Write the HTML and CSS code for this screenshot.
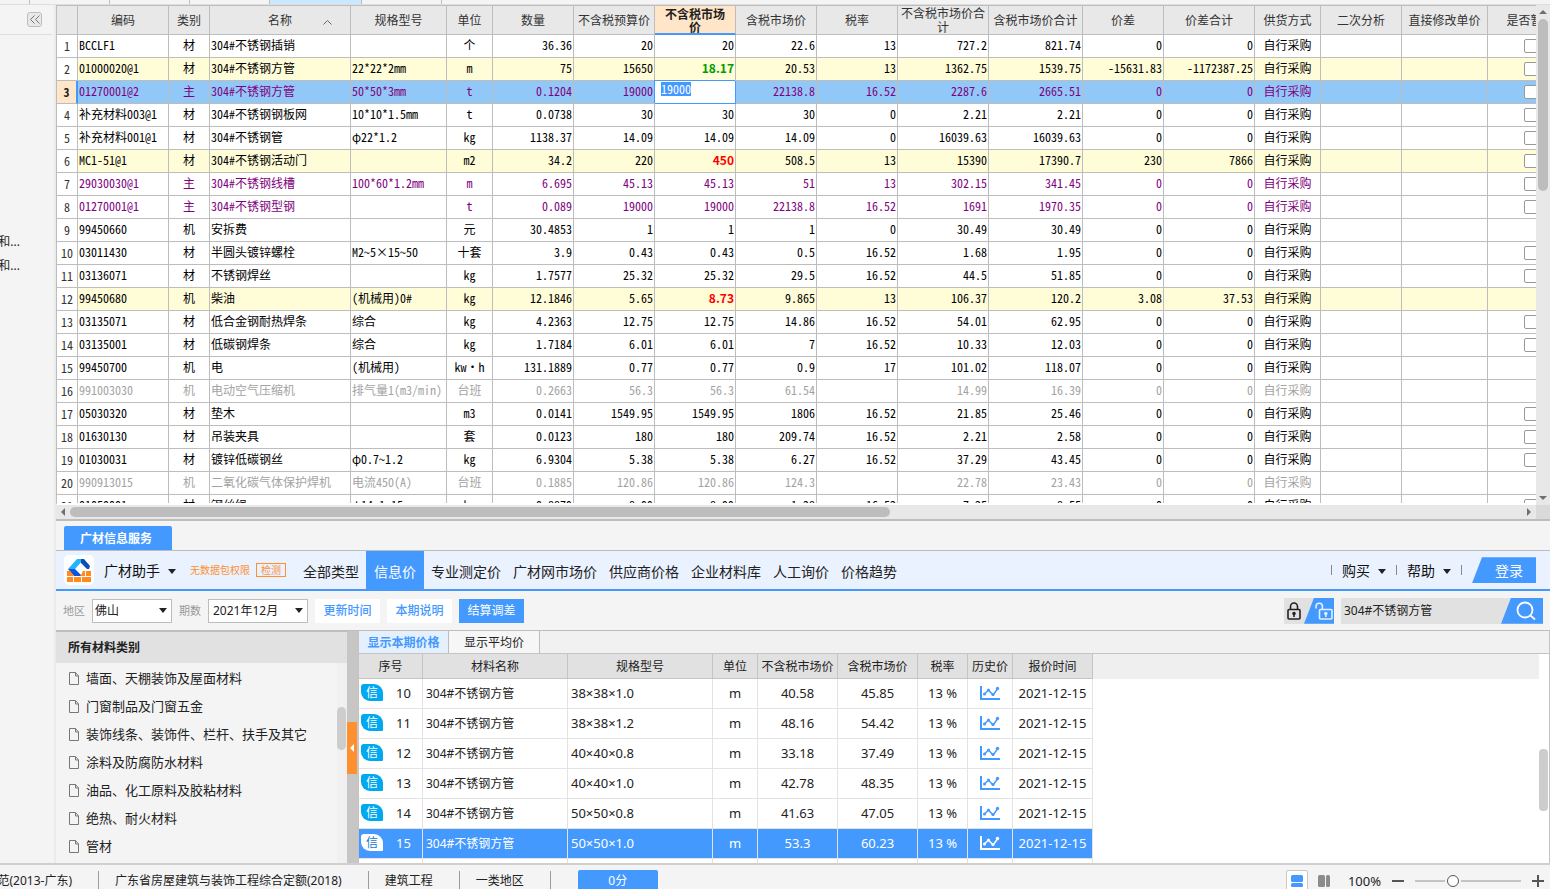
FILE: index.html
```html
<!DOCTYPE html>
<html lang="zh-CN">
<head>
<meta charset="utf-8">
<title>人材机汇总</title>
<link rel="stylesheet" href="styles.css">
</head>
<body>
<div class="doc-tabs"><span class="doc-tab first"></span><span class="doc-tab"></span><span class="doc-tab"></span><span class="doc-tab"></span><span class="doc-tab active"></span><span class="doc-tab"></span></div>

<div class="main">
  <aside class="rail">
    <div class="rail-head">
      <button class="collapse" aria-label="收起">
        <svg width="10" height="9" viewBox="0 0 10 9" fill="none" stroke="#777" stroke-width="1"><path d="M4.500 .5l-4 4 4 4M9.500 .5l-4 4 4 4"/></svg>
      </button>
    </div>
    <ul class="rail-list">
      <li>和...</li>
      <li>和...</li>
    </ul>
  </aside>

  <div class="workspace">
    <section class="grid-panel">
      <div class="grid-row">
        <div class="grid-view">
          <table class="grid">
            <colgroup>
              <col class="w21"><col class="w91"><col class="w41"><col class="w141"><col class="w96"><col class="w46"><col class="w81"><col class="w81"><col class="w81"><col class="w81"><col class="w81"><col class="w91"><col class="w94"><col class="w81"><col class="w91"><col class="w66"><col class="w81"><col class="w86"><col class="w86">
            </colgroup>
            <thead>
              <tr>
                <th></th><th>编码</th><th>类别</th>
                <th><div class="sorted">名称<svg class="sort" width="9" height="5" viewBox="0 0 9 5" fill="none" stroke="#666"><path d="M.5 4.500l4-4 4 4"/></svg></div></th>
                <th>规格型号</th><th>单位</th><th>数量</th><th>不含税预算价</th><th class="current">不含税市场价</th><th>含税市场价</th><th>税率</th><th>不含税市场价合计</th><th>含税市场价合计</th><th>价差</th><th>价差合计</th><th>供货方式</th><th>二次分析</th><th>直接修改单价</th><th>是否暂估</th>
              </tr>
            </thead>
            <tbody id="materials"></tbody>
          </table>
        </div>
        <div class="vbar"><i class="arrow up"></i><i class="vthumb"></i><i class="arrow down"></i></div>
      </div>
      <div class="hbar"><div class="htrack"><i class="arrow left"></i><i class="hthumb"></i><i class="arrow right"></i></div><div class="corner"></div></div>
    </section>

    <section class="info-panel">
      <div class="panel-tabs"><button class="panel-tab">广材信息服务</button></div>

      <header class="toolbar">
        <div class="logo">
          <svg width="24" height="24" viewBox="0 0 24 24">
            <path d="M10 1h7l-9 10H1z" fill="#25b4fa"/>
            <path d="M14 1h3l6 7-1 3h-2l-6-6z" fill="#0c4fb4"/>
            <path d="M1 11h7l6 6-1 2H8z" fill="#0a56e0"/>
            <path d="M0 13h3l5 6h5l3-6h8v11H0z" fill="#ff8a1e"/>
            <path d="M0 18.500h24M6.500 18.500V24M14.500 18.500V24M18.500 13v5.500" stroke="#fff" stroke-width="1"/>
          </svg>
        </div>
        <button class="menu brand">广材助手<i class="caret"></i></button>
        <span class="notice">无数据包权限</span>
        <button class="detect">检测</button>
        <nav class="nav">
          <a href="#">全部类型</a><a href="#" class="active">信息价</a><a href="#">专业测定价</a><a href="#">广材网市场价</a><a href="#">供应商价格</a><a href="#">企业材料库</a><a href="#">人工询价</a><a href="#">价格趋势</a>
        </nav>
        <div class="account">
          <i class="bar"></i><button class="menu">购买<i class="caret"></i></button>
          <i class="bar"></i><button class="menu">帮助<i class="caret"></i></button>
          <i class="bar"></i><button class="login">登录</button>
        </div>
      </header>

      <div class="filters">
        <label for="region">地区</label>
        <div class="select short"><select id="region"><option>佛山</option></select><i class="caret"></i></div>
        <label for="period">期数</label>
        <div class="select"><select id="period"><option>2021年12月</option></select><i class="caret"></i></div>
        <button class="chip">更新时间</button>
        <button class="chip">本期说明</button>
        <button class="chip primary">结算调差</button>
        <div class="tools">
          <div class="locks">
            <button class="lock" aria-label="锁定">
              <svg width="14" height="18" viewBox="0 0 14 18" fill="none" stroke="#222" stroke-width="1.600"><rect x="1" y="7.500" width="12" height="9.500" rx="1"/><path d="M3.500 7.500V4.500a3.500 3.500 0 0 1 7 0v3"/><path d="M7 11v4" /><circle cx="7" cy="11.500" r="1" fill="#222"/></svg>
            </button>
            <button class="unlock" aria-label="解锁">
              <svg width="18" height="18" viewBox="0 0 18 18" fill="none" stroke="#e4f0ff" stroke-width="1.600"><rect x="4.500" y="7.500" width="12.500" height="9.500" rx="1"/><path d="M1 6.500V4.500a3.200 3.200 0 0 1 6.400 0v3"/><path d="M10.800 11v4"/><circle cx="10.800" cy="11.500" r="1" fill="#e4f0ff"/></svg>
            </button>
          </div>
          <div class="search">
            <input type="text" value="304#不锈钢方管" aria-label="搜索材料">
            <button aria-label="搜索"><svg width="20" height="20" viewBox="0 0 20 20" fill="none" stroke="#fff" stroke-width="1.800"><circle cx="9" cy="9" r="7.500"/><path d="M14.300 14.300l4.700 4.200"/></svg></button>
          </div>
        </div>
      </div>

      <div class="split">
        <aside class="categories">
          <h2>所有材料类别</h2>
          <div class="cat-body">
            <ul id="categories"></ul>
            <div class="cat-bar"><i></i></div>
          </div>
        </aside>
        <div class="splitter"><button class="handle" aria-label="收起类别"></button></div>
        <div class="prices">
          <div class="price-tabs"><button class="active">显示本期价格</button><button>显示平均价</button></div>
          <div class="price-body">
            <div class="price-view">
              <table class="price">
                <colgroup><col class="p64"><col class="p145"><col class="p145"><col class="p45"><col class="p80"><col class="p80"><col class="p50"><col class="p45"><col class="p80"><col></colgroup>
                <thead><tr><th>序号</th><th>材料名称</th><th>规格型号</th><th>单位</th><th>不含税市场价</th><th>含税市场价</th><th>税率</th><th>历史价</th><th>报价时间</th><td class="rest"></td></tr></thead>
                <tbody id="prices"></tbody>
              </table>
            </div>
            <div class="price-bar"><i></i></div>
          </div>
        </div>
      </div>
    </section>
  </div>
</div>

<footer class="status">
  <div class="status-inner">
    <span class="st cut">范(2013-广东)</span>
    <span class="st">广东省房屋建筑与装饰工程综合定额(2018)</span>
    <span class="st">建筑工程</span>
    <span class="st">一类地区</span>
    <button class="score">0分</button>
    <div class="view">
      <button class="mode on" aria-label="上下布局"><svg width="12" height="12" viewBox="0 0 12 12" fill="#4499ff"><rect width="12" height="7" rx="1.500"/><rect y="8" width="12" height="4" rx="1.500"/></svg></button>
      <button class="mode" aria-label="左右布局"><svg width="12" height="12" viewBox="0 0 12 12" fill="#8c8c8c"><rect width="7" height="12" rx="1.500"/><rect x="8" width="4" height="12" rx="1.500"/></svg></button>
      <label class="percent" for="zoom">100%</label>
      <button class="step" aria-label="缩小"><svg width="12" height="12" stroke="#555" stroke-width="2"><path d="M0 6h12"/></svg></button>
      <input class="zoom" id="zoom" type="range" min="0" max="100" value="34">
      <button class="step" aria-label="放大"><svg width="12" height="12" stroke="#555" stroke-width="2"><path d="M0 6h12M6 0v12"/></svg></button>
    </div>
  </div>
</footer>
<script src="script.js"></script>
</body>
</html>
```
FILE: styles.css
```css
* { box-sizing: border-box; }
html, body { height: 100%; }
body {
  margin: 0;
  display: flex;
  flex-direction: column;
  overflow: hidden;
  background: #f4f4f4;
  color: #222;
  font: 12px/16px "Noto Sans", "Noto Sans CJK SC", sans-serif;
}
button, input, select { font: inherit; color: inherit; margin: 0; padding: 0; border: 0; background: none; border-radius: 0; }
ul { list-style: none; margin: 0; padding: 0; }
a { color: inherit; text-decoration: none; }
svg { display: block; flex: none; }

.doc-tabs { display: flex; height: 5px; flex: none; border-bottom: 1px solid #dedede; }
.doc-tab { width: 80px; border-right: 1px solid #bdbdbd; }
.doc-tab.first { width: 30px; }
.doc-tab.active { width: 92px; background: #cce8ff; }

.main { flex: 1; display: flex; min-height: 0; }
.rail { width: 56px; flex: none; border-right: 2px solid #ebebeb; }
.rail-head { display: flex; justify-content: flex-end; align-items: center; height: 30px; margin-right: 2px; padding-right: 10px; border-bottom: 1px solid #dedede; }
.collapse { width: 15px; height: 15px; display: grid; place-items: center; border: 1px solid #bdbdbd; border-radius: 3px; background: #e8e8e8; }
.rail-list { padding-top: 195px; }
.rail-list li { width: 20px; height: 24px; line-height: 24px; display: flex; justify-content: flex-end; overflow: hidden; white-space: nowrap; }

.workspace { flex: 1; min-width: 0; display: flex; flex-direction: column; }
.grid-panel { flex: 516 1 0; min-height: 0; display: flex; flex-direction: column; border-bottom: 2px solid #bdbdbd; }
.grid-row { flex: 1; min-height: 0; display: flex; }
.grid-view { flex: 1; min-width: 0; overflow: hidden; background: #fff; border: solid #bdbdbd; border-width: 1px 0 0 1px; border-bottom: 2px solid #fff; }
.grid {
  table-layout: fixed;
  width: 1px;
  border-spacing: 0;
  color: #000;
  font: 12px/14px "Noto Sans CJK SC", sans-serif;
  font-feature-settings: "hwid";
}
.w21 { width: 21px; } .w41 { width: 41px; } .w46 { width: 46px; } .w66 { width: 66px; }
.w81 { width: 81px; } .w86 { width: 86px; } .w91 { width: 91px; } .w94 { width: 94px; }
.w96 { width: 96px; } .w141 { width: 141px; }
.grid th, .grid td { border: solid #bdbdbd; border-width: 0 1px 1px 0; overflow: hidden; white-space: nowrap; }
.grid td { padding: 0 1px 2px; }
.grid th { padding: 0 2px; font-weight: 400; color: #333; text-align: center; }
.grid thead th { height: 29px; background: #e8e8e8; white-space: normal; }
.grid thead th.current { padding: 0 6px; background: #ffe6c8; font-weight: 700; color: #222; border-bottom: 2px solid #4499ff; line-height: 13px; }
.sorted { display: flex; justify-content: center; align-items: center; position: relative; }
.sort { position: absolute; right: 16px; top: 7px; }
.grid tbody th { padding: 0; }
.grid tbody td, .grid tbody th { height: 23px; }
.grid .c { text-align: center; }
.grid .r { text-align: right; }
.grid .changed td { background: #fffcd8; }
.grid .main-item { color: #800080; }
.grid .locked td { color: #a3a3a3; }
.grid .selected td { background: #92c8f7; }
.grid .selected th { background: #ffe6c8; font-weight: 700; border-right: 2px solid #4499ff; color: #222; }
.grid .fall, .grid .rise { font-weight: 700; font-feature-settings: normal; }
.grid .fall { color: #009c00; }
.grid .rise { color: #ff0000; }
.grid .selected .editing { background: #fff; border-color: #4499ff; box-shadow: -1px -1px 0 #4499ff; vertical-align: top; padding: 1px 6px; text-align: left; }
.editing input { display: block; width: 30px; height: 14px; line-height: 14px; background: #4499ff; color: #fff; font-feature-settings: "hwid"; }
.grid input[type="checkbox"] { appearance: none; display: block; width: 14px; height: 14px; margin: 1px auto 0; border: 1px solid #999; border-radius: 2px; background: #fff; }

.arrow { width: 0; height: 0; border: 4px solid transparent; }
.up { border-top: 0; border-bottom-color: #6e6e78; }
.down { border-bottom: 0; border-top-color: #6e6e78; }
.left { border-left: 0; border-right-color: #6e6e78; }
.right { border-right: 0; border-left-color: #6e6e78; }
.vbar { width: 14px; flex: none; display: flex; flex-direction: column; align-items: center; padding: 5px 0 5px; background: #e8e8e8; }
.vthumb { width: 10px; flex: 0 0 35%; margin: 5px 0 auto; border-radius: 5px; background: #bdbdbd; }
.hbar { height: 14px; flex: none; display: flex; }
.htrack { flex: 1; display: flex; align-items: center; padding: 0 5px; background: #e8e8e8; }
.hthumb { height: 10px; width: 820px; margin: 0 auto 0 5px; border-radius: 5px; background: #bdbdbd; }
.corner { width: 14px; background: #d9d9d9; }

.info-panel { flex: 343 1 0; min-height: 0; display: flex; flex-direction: column; }
.panel-tabs { height: 29px; flex: none; display: flex; align-items: flex-end; padding-left: 8px; }
.panel-tab { height: 24px; padding: 2px 20px 0 16px; background: #4499ff; color: #fff; font-weight: 700; border-radius: 2px 2px 0 0; }
.toolbar { height: 41px; flex: none; display: flex; align-items: center; padding: 0 14px 0 8px; border-top: 1px solid #bdbdbd; border-bottom: 2px solid #4499ff; background: #eaf1ff; white-space: nowrap; }
.logo { width: 30px; height: 30px; display: grid; place-items: center; margin-right: 10px; border-radius: 5px; background: #fff; }
.menu { display: flex; align-items: center; gap: 8px; padding-top: 2px; font-size: 14px; line-height: 20px; color: #111; }
.caret { flex: none; width: 0; height: 0; border: solid transparent; border-width: 5px 4px 0; border-top-color: #222; }
.notice { margin-left: 14px; font-size: 10px; color: #ff9030; }
.detect { width: 30px; height: 14px; margin: 0 11px 0 6px; border: 1px solid #ff9030; color: #ff9030; font-size: 10px; line-height: 12px; }
.nav { display: flex; align-self: stretch; font-size: 14px; line-height: 42px; }
.nav a { height: 38px; padding: 0 6px; }
.nav .active { padding: 0 8px; margin: 0 1px; background: #4499ff; color: #fff; }
.account { margin-left: auto; display: flex; align-items: center; gap: 10px; }
.bar { width: 1px; height: 10px; background: #888; }
.login { width: 64px; height: 26px; padding: 1px 0 0 10px; background: #4499ff; color: #fff; font-size: 14px; clip-path: polygon(10px 0, 100% 0, 100% 100%, 0 100%); }

.filters { height: 39px; flex: none; display: flex; align-items: center; padding: 0 7px; white-space: nowrap; }
.filters label { color: #999; font-size: 11px; margin-right: 7px; }
.select { position: relative; width: 100px; height: 24px; margin-right: 7px; border: 1px solid #bdbdbd; background: #fff; }
.select.short { width: 80px; }
.select select { appearance: none; width: 100%; height: 100%; padding-left: 4px; }
.select.short select { padding-left: 2px; }
.select .caret { position: absolute; right: 4px; top: 8px; pointer-events: none; }
.chip { width: 65px; height: 24px; margin-right: 7px; background: #fff; color: #4499ff; font-weight: 500; }
.chip.primary { background: #4499ff; color: #fff; font-weight: 400; }
.tools { margin-left: auto; display: flex; gap: 7px; height: 26px; }
.locks { display: flex; width: 50px; background: #e1e1e1; }
.lock { width: 20px; display: grid; place-items: center; }
.unlock { width: 30px; display: grid; place-items: center end; padding-right: 1px; background: #4499ff; clip-path: polygon(10px 0, 100% 0, 100% 100%, 0 100%); }
.search { display: flex; width: 202px; background: #e1e1e1; }
.search input { flex: 1; min-width: 0; padding-left: 3px; }
.search button { width: 42px; display: grid; place-items: center; padding-left: 8px; background: #4499ff; clip-path: polygon(10px 0, 100% 0, 100% 100%, 0 100%); }

.split { flex: 1; min-height: 0; display: flex; border-top: 1px solid #bdbdbd; }
.categories { width: 291px; flex: none; display: flex; flex-direction: column; min-height: 0; border-top: 1px solid #bdbdbd; }
.categories h2 { margin: 0; flex: none; height: 31px; padding-left: 12px; background: #e1e1e1; font-size: 12px; line-height: 31px; font-weight: 700; }
.cat-body { flex: 1; min-height: 0; display: flex; overflow: hidden; }
.cat-body ul { flex: 1; padding-top: 1px; }
.cat-body li { display: flex; align-items: center; gap: 7px; height: 28px; padding-left: 13px; font-size: 13px; line-height: 20px; white-space: nowrap; }
.cat-bar { width: 10px; background: #f0f0f0; padding-top: 44px; }
.cat-bar i { display: block; width: 9px; height: 43px; border-radius: 5px; background: #cdcdcd; }
.splitter { width: 11px; flex: none; display: flex; align-items: center; padding-top: 2px; background: #c8c6c4; }
.handle { width: 10px; height: 52px; display: grid; place-items: center; background: #ff9030; }
.handle::before { content: ""; border: solid transparent; border-width: 4px 4px 4px 0; border-right-color: #fff; }
.prices { flex: 1; min-width: 0; display: flex; flex-direction: column; border: solid #c4c4c4; border-width: 0 1px 0 1px; background: #fff; }
.price-tabs { height: 23px; flex: none; display: flex; background: #f1f1f1; border-bottom: 1px solid #c4c4c4; }
.price-tabs button { width: 91px; padding-top: 2px; border-right: 1px solid #bdbdbd; background: #f6f6f6; }
.price-tabs .active { width: 90px; background: #e4f0fe; color: #4499ff; font-weight: 700; }
.price-body { flex: 1; min-height: 0; display: flex; }
.price-view { flex: 1; min-width: 0; overflow: hidden; }
.price { table-layout: fixed; width: 100%; border-spacing: 0; }
.p64 { width: 64px; } .p145 { width: 145px; } .p45 { width: 45px; } .p80 { width: 80px; } .p50 { width: 50px; }
.price th { height: 25px; padding: 2px 0 0; background: #e1e1e1; font-weight: 400; white-space: nowrap; border: solid #c4c4c4; border-width: 0 1px 1px 0; }
.price .rest { background: #efefef; border: 0; }
.price tbody td { height: 30px; padding: 0 0 2px; border: solid #e3e3e3; border-width: 0 1px 1px 0; text-align: center; white-space: nowrap; font-size: 13px; }
.price tbody td.name { text-align: left; padding: 0 0 0 3px; font-size: 12px; }
.price tbody td.spec { text-align: left; padding-left: 3px; }
.price tbody td.none { border: 0; }
.price .chosen td { background: #4499ff; color: #fff; }
.price .chosen td.none { background: #fff; }
.index { display: flex; align-items: center; gap: 13px; padding-left: 2px; }
.badge { width: 22px; height: 17px; border-radius: 3px 9px 1px 9px; background: #00a8f0; color: #fff; font-size: 12px; line-height: 17px; text-align: center; }
.chosen .badge { background: #fff; color: #2277cc; }
.trend { margin: 0 auto; color: #4499ff; }
.chosen .trend { color: #fff; }
.price-bar { width: 10px; padding-top: 95px; }
.price-bar i { display: block; width: 9px; height: 62px; border-radius: 4px; background: #cdcdcd; }

.status { height: 26px; flex: none; overflow: hidden; border-top: 2px solid #cfcfcf; background: #f4f4f4; }
.status-inner { height: 32px; display: flex; align-items: center; padding-right: 6px; white-space: nowrap; }
.st { height: 20px; line-height: 20px; padding: 0 26px 0 16px; border-right: 1px solid #999ca8; }
.st.cut { width: 99px; padding-left: 0; display: flex; justify-content: flex-end; overflow: hidden; }
.score { width: 80px; height: 22px; margin-left: 27px; border-radius: 2px; background: #4499ff; color: #fff; }
.view { margin-left: auto; display: flex; align-items: center; }
.mode { width: 22px; height: 22px; display: grid; place-items: center; margin-right: 5px; }
.mode.on { background: #fff; border: 1px solid #c8c8c8; border-radius: 2px; }
.percent { margin: 0 11px 0 8px; font-size: 13px; }
.zoom { appearance: none; width: 106px; height: 14px; margin: 0 11px; background: linear-gradient(#c4c4c4, #c4c4c4) center / 100% 2px no-repeat; }
.zoom::-webkit-slider-thumb { appearance: none; width: 12px; height: 12px; border: 1px solid #555; border-radius: 50%; background: #fff; box-shadow: 0 0 0 2px #f4f4f4; }
```
FILE: script.js
```js
// Columns: code, category, name, spec, unit, quantity, budget price, market price,
// taxed price, tax rate, total, taxed total, difference, difference total.
const rows = [
  ["BCCLF1","材","304#不锈钢插销","","个","36.36","20","20","22.6","13","727.2","821.74","0","0"],
  ["01000020@1","材","304#不锈钢方管","22*22*2mm","m","75","15650","18.17","20.53","13","1362.75","1539.75","-15631.83","-1172387.25"],
  ["01270001@2","主","304#不锈钢方管","50*50*3mm","t","0.1204","19000","19000","22138.8","16.52","2287.6","2665.51","0","0"],
  ["补充材料003@1","材","304#不锈钢钢板网","10*10*1.5mm","t","0.0738","30","30","30","0","2.21","2.21","0","0"],
  ["补充材料001@1","材","304#不锈钢管","φ22*1.2","kg","1138.37","14.09","14.09","14.09","0","16039.63","16039.63","0","0"],
  ["MC1-51@1","材","304#不锈钢活动门","","m2","34.2","220","450","508.5","13","15390","17390.7","230","7866"],
  ["29030030@1","主","304#不锈钢线槽","100*60*1.2mm","m","6.695","45.13","45.13","51","13","302.15","341.45","0","0"],
  ["01270001@1","主","304#不锈钢型钢","","t","0.089","19000","19000","22138.8","16.52","1691","1970.35","0","0"],
  ["99450660","机","安拆费","","元","30.4853","1","1","1","0","30.49","30.49","0","0"],
  ["03011430","材","半圆头镀锌螺栓","M2~5×15~50","十套","3.9","0.43","0.43","0.5","16.52","1.68","1.95","0","0"],
  ["03136071","材","不锈钢焊丝","","kg","1.7577","25.32","25.32","29.5","16.52","44.5","51.85","0","0"],
  ["99450680","机","柴油","(机械用)0#","kg","12.1846","5.65","8.73","9.865","13","106.37","120.2","3.08","37.53"],
  ["03135071","材","低合金钢耐热焊条","综合","kg","4.2363","12.75","12.75","14.86","16.52","54.01","62.95","0","0"],
  ["03135001","材","低碳钢焊条","综合","kg","1.7184","6.01","6.01","7","16.52","10.33","12.03","0","0"],
  ["99450700","机","电","(机械用)","kw·h","131.1889","0.77","0.77","0.9","17","101.02","118.07","0","0"],
  ["991003030","机","电动空气压缩机","排气量1(m3/min)","台班","0.2663","56.3","56.3","61.54","","14.99","16.39","0","0"],
  ["05030320","材","垫木","","m3","0.0141","1549.95","1549.95","1806","16.52","21.85","25.46","0","0"],
  ["01630130","材","吊装夹具","","套","0.0123","180","180","209.74","16.52","2.21","2.58","0","0"],
  ["01030031","材","镀锌低碳钢丝","φ0.7~1.2","kg","6.9304","5.38","5.38","6.27","16.52","37.29","43.45","0","0"],
  ["990913015","机","二氧化碳气体保护焊机","电流450(A)","台班","0.1885","120.86","120.86","124.3","","22.78","23.43","0","0"],
  ["01050001","材","钢丝绳","φ14.1~15","kg","0.8879","8.99","8.99","1.28","16.52","7.25","8.55","0","0"]
];
const changed = { 1: "fall", 5: "rise", 11: "rise" };
const locked = [15, 19];
document.getElementById("materials").innerHTML = rows.map((row, i) => {
  const state = [];
  if (i in changed) state.push("changed");
  if (row[1] === "主") state.push("main-item");
  if (i === 2) state.push("selected");
  if (locked.includes(i)) state.push("locked");
  const cells = row.map((value, k) => {
    if (i === 2 && k === 7) return `<td class="editing"><input type="text" value="${value}" aria-label="不含税市场价"></td>`;
    const align = k === 1 || k === 4 ? "c" : k > 4 ? "r" : "";
    const tone = k === 7 && changed[i] ? " " + changed[i] : "";
    return `<td class="${align}${tone}">${value}</td>`;
  }).join("");
  const box = row[1] === "机" ? "" : `<input type="checkbox" aria-label="是否暂估 ${i + 1}">`;
  return `<tr class="${state.join(" ")}"><th>${i + 1}</th>${cells}<td class="c">自行采购</td><td></td><td></td><td>${box}</td></tr>`;
}).join("");

const categories = ["墙面、天棚装饰及屋面材料", "门窗制品及门窗五金", "装饰线条、装饰件、栏杆、扶手及其它", "涂料及防腐防水材料", "油品、化工原料及胶粘材料", "绝热、耐火材料", "管材"];
document.getElementById("categories").innerHTML = categories.map(name =>
  `<li><svg width="10" height="13" viewBox="0 0 10 13" fill="none" stroke="#777"><path d="M.5 .5h6l3 3.500v8.500h-9zM6.500 .5v3.500h3"/></svg>${name}</li>`).join("");

const prices = [
  [10, "38×38×1.0", "40.58", "45.85"],
  [11, "38×38×1.2", "48.16", "54.42"],
  [12, "40×40×0.8", "33.18", "37.49"],
  [13, "40×40×1.0", "42.78", "48.35"],
  [14, "50×50×0.8", "41.63", "47.05"],
  [15, "50×50×1.0", "53.3", "60.23"]
];
const trend = `<svg class="trend" width="20" height="14" viewBox="0 0 20 14" fill="none" stroke="currentColor"><path d="M1 0v13h19" stroke-width="2"/><path d="M4.500 8l4-4 4.500 5 4.500-6" stroke-width="1.500"/><g fill="currentColor" stroke="none"><circle cx="4.500" cy="8" r="1.500"/><circle cx="8.500" cy="4" r="1.500"/><circle cx="13" cy="8.500" r="1.500"/><circle cx="17.500" cy="2.500" r="1.700"/></g></svg>`;
document.getElementById("prices").innerHTML = prices.map(([n, spec, net, gross]) =>
  `<tr class="${n === 15 ? "chosen" : ""}"><td><div class="index"><span class="badge">信</span>${n}</div></td><td class="name">304#不锈钢方管</td><td class="spec">${spec}</td><td>m</td><td>${net}</td><td>${gross}</td><td>13 %</td><td>${trend}</td><td>2021-12-15</td><td class="none"></td></tr>`
).join("") + `<tr>${"<td></td>".repeat(9)}<td class="none"></td></tr>`;
```
